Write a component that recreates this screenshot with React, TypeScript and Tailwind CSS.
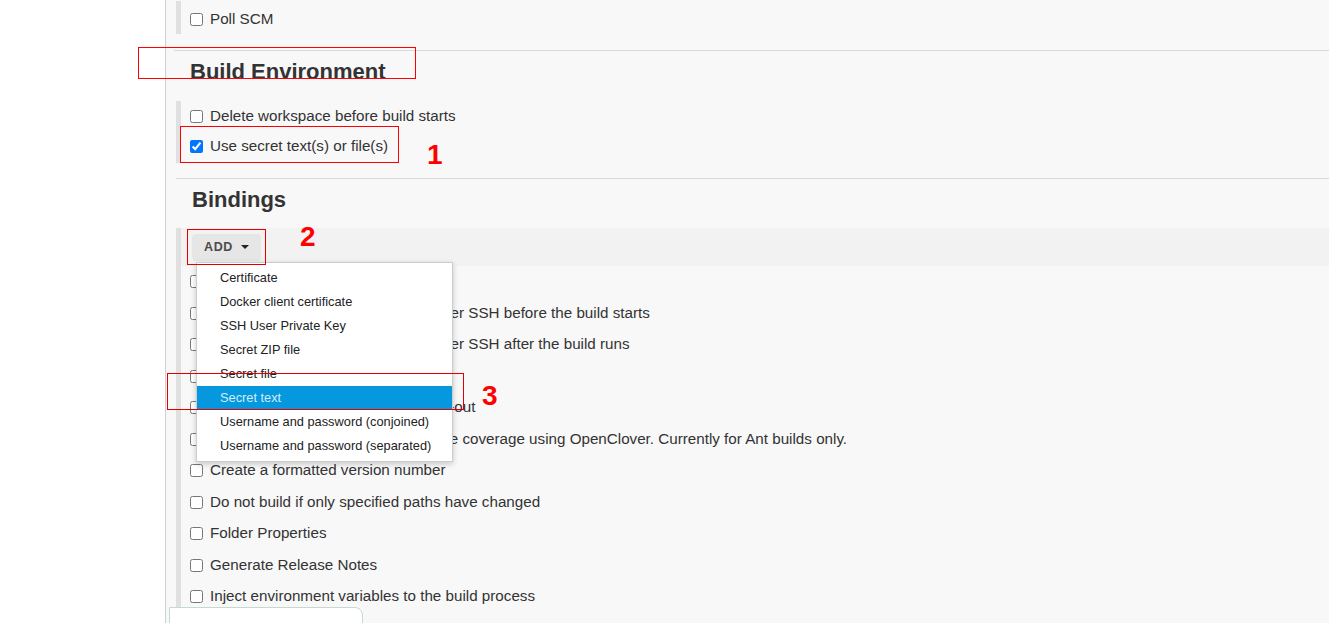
import { useState } from "react";

const font = { fontFamily: '"Liberation Sans", Arial, sans-serif' };

const menuItems = [
  "Certificate",
  "Docker client certificate",
  "SSH User Private Key",
  "Secret ZIP file",
  "Secret file",
  "Secret text",
  "Username and password (conjoined)",
  "Username and password (separated)",
];

const wrappers = [
  "Abort the build if it's stuck",
  "Send files or execute commands over SSH before the build starts",
  "Send files or execute commands over SSH after the build runs",
  "Set Build Name",
  "Abort the build if it's stuck after time-out",
  "Automatically record and report code coverage using OpenClover. Currently for Ant builds only.",
  "Create a formatted version number",
  "Do not build if only specified paths have changed",
  "Folder Properties",
  "Generate Release Notes",
  "Inject environment variables to the build process",
];

function Check({
  label,
  checked = false,
  h = "h-[31px]",
}: {
  label: string;
  checked?: boolean;
  h?: string;
}) {
  const [on, setOn] = useState(checked);
  return (
    <label className={`flex ${h} items-center gap-[7px] text-[15.2px] text-[#333] whitespace-nowrap`}>
      <input
        type="checkbox"
        checked={on}
        onChange={() => setOn(!on)}
        className="m-0 h-[13px] w-[13px] accent-[#0075ff]"
      />
      <span>{label}</span>
    </label>
  );
}

function Annotation({ n, className }: { n: string; className: string }) {
  return (
    <span className={`absolute text-[28px] font-bold leading-none text-[#ff0000] ${className}`}>
      {n}
    </span>
  );
}

export default function App() {
  return (
    <div className="relative flex h-[623px] w-[1329px] overflow-hidden bg-white" style={font}>
      <aside className="w-[166px] shrink-0 border-r border-[#d0d0d0] bg-white" />

      <main className="relative flex-1 bg-[#f8f8f8] pl-[10px] pt-[1px]">
        <div className="h-[33px] border-l-[5px] border-[#e0e0e0] pl-[9px] pt-[3px]">
          <Check label="Poll SCM" />
        </div>

        <div className="ml-[-2px] mt-[16px] border-t border-[#dadada]" />
        <h2 className="pl-[14px] pt-[7px] text-[22px] font-bold leading-[28px] text-[#333]">
          Build Environment
        </h2>

        <div className="mt-[15px] border-l-[5px] border-[#e0e0e0] pb-[2px] pl-[9px]">
          <Check label="Delete workspace before build starts" h="h-[30px]" />
          <Check label="Use secret text(s) or file(s)" checked h="h-[30px]" />
        </div>

        <div className="mt-[15px] border-t border-[#dadada]" />
        <h2 className="pl-[16px] pt-[7px] text-[22px] font-bold leading-[28px] text-[#333]">
          Bindings
        </h2>

        <div className="mt-[14px] border-l-[5px] border-[#e0e0e0]">
          <div className="flex h-[38px] items-center bg-[#f2f2f2] pl-[11px]">
            <button className="flex h-[27px] w-[69px] items-center gap-[8px] rounded-[4px] bg-[#e6e6e6] pl-[12px] text-[12.5px] font-bold tracking-[0.6px] text-[#4a4a4a]">
              ADD
              <span className="h-0 w-0 border-x-[4px] border-t-[4.5px] border-x-transparent border-t-[#222]" />
            </button>
          </div>
          <div className="pl-[9px]">
            {wrappers.map((w) => (
              <Check key={w} label={w} h="h-[31.5px]" />
            ))}
          </div>
        </div>

        <ul className="absolute left-[30px] top-[262px] w-[257px] border border-[#cccccc] bg-white py-[3px] text-[12.8px] text-[#222] shadow-[0_2px_6px_rgba(0,0,0,0.2)]">
          {menuItems.map((m) => (
            <li
              key={m}
              className={`flex h-[24px] items-center pl-[23px] ${
                m === "Secret text" ? "bg-[#0598de] text-[#d4ecfa]" : ""
              }`}
            >
              {m}
            </li>
          ))}
        </ul>

        <div className="absolute left-[3px] top-[607px] h-[30px] w-[194px] rounded-tr-[8px] border border-[#c5d9cf] bg-white" />
      </main>

      <div className="pointer-events-none absolute left-[138px] top-[47px] h-[32px] w-[278px] border border-[#ff0000]" />
      <div className="pointer-events-none absolute left-[180px] top-[126px] h-[37px] w-[219px] border border-[#ff0000]" />
      <div className="pointer-events-none absolute left-[187px] top-[229px] h-[36px] w-[79px] border border-[#e00000]" />
      <div className="pointer-events-none absolute left-[167px] top-[373px] h-[37px] w-[297px] border border-[#e00000]" />
      <Annotation n="1" className="left-[427px] top-[141px]" />
      <Annotation n="2" className="left-[300px] top-[223px]" />
      <Annotation n="3" className="left-[482px] top-[382px]" />
    </div>
  );
}
